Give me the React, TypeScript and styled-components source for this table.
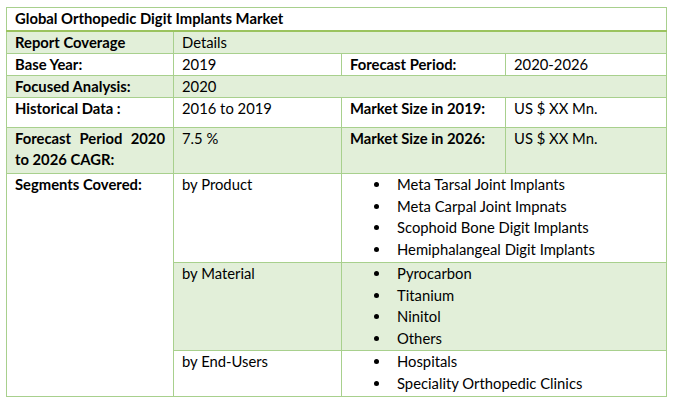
import React, { ReactElement } from 'react'
import styled, { createGlobalStyle } from 'styled-components'

const GREEN_BORDER = '#a8d08d'
const GREEN_STRONG = '#9bc35f'
const GREEN_FILL = '#e2efd9'

const GlobalStyle = createGlobalStyle`
  html, body {
    margin: 0;
    padding: 0;
    background: #ffffff;
  }
  body {
    font-family: Lato, "Open Sans", "Liberation Sans", sans-serif;
    color: #000000;
  }
`

const Page = styled.div`
  padding: 7px 0 0 6px;
  width: 673px;
  height: 404px;
  box-sizing: border-box;
`

const Table = styled.table`
  border-collapse: collapse;
  table-layout: fixed;
  width: 660px;
  font-size: 14.8px;
  line-height: 21px;
`

const Cell = styled.td<{ $bold?: boolean; $shaded?: boolean; $h?: number; $justify?: boolean }>`
  border: 1px solid ${GREEN_BORDER};
  padding: 0 8px;
  vertical-align: top;
  font-weight: ${(p) => (p.$bold ? 700 : 400)};
  background: ${(p) => (p.$shaded ? GREEN_FILL : '#ffffff')};
  height: ${(p) => (p.$h ? `${p.$h}px` : 'auto')};
  box-sizing: border-box;
  text-align: ${(p) => (p.$justify ? 'justify' : 'left')};
  text-align-last: left;
  white-space: ${(p) => (p.$justify ? 'normal' : 'nowrap')};
`

const TitleCell = styled(Cell)`
  border-bottom: 2px solid ${GREEN_STRONG};
`

const List = styled.ul`
  list-style: none;
  margin: 0;
  padding: 0 0 0 24px;
`

const Item = styled.li`
  display: flex;
  align-items: center;
  height: 21.7px;
  &::before {
    content: '';
    width: 5px;
    height: 5px;
    border-radius: 50%;
    background: #000000;
    margin-right: 18px;
    flex: none;
  }
`

const segments = [
  {
    label: 'by Product',
    h: 89,
    shaded: false,
    items: [
      'Meta Tarsal Joint Implants',
      'Meta Carpal Joint Impnats',
      'Scophoid Bone Digit Implants',
      'Hemiphalangeal Digit Implants',
    ],
  },
  {
    label: 'by Material',
    h: 88,
    shaded: true,
    items: ['Pyrocarbon', 'Titanium', 'Ninitol', 'Others'],
  },
  {
    label: 'by End-Users',
    h: 46,
    shaded: false,
    items: ['Hospitals', 'Speciality Orthopedic Clinics'],
  },
]

const App = (): ReactElement => {
  return (
    <Page>
      <GlobalStyle />
      <Table>
        <colgroup>
          <col style={{ width: 167 }} />
          <col style={{ width: 168 }} />
          <col style={{ width: 164 }} />
          <col style={{ width: 161 }} />
        </colgroup>
        <tbody>
          <tr>
            <TitleCell $bold colSpan={4} $h={23}>
              Global Orthopedic Digit Implants Market
            </TitleCell>
          </tr>
          <tr>
            <Cell $bold $shaded $h={22}>Report Coverage</Cell>
            <Cell $shaded colSpan={3}>Details</Cell>
          </tr>
          <tr>
            <Cell $bold $h={22}>Base Year:</Cell>
            <Cell>2019</Cell>
            <Cell $bold>Forecast Period:</Cell>
            <Cell>2020-2026</Cell>
          </tr>
          <tr>
            <Cell $bold $shaded $h={22}>Focused Analysis:</Cell>
            <Cell $shaded colSpan={3}>2020</Cell>
          </tr>
          <tr>
            <Cell $bold $h={30}>Historical Data :</Cell>
            <Cell>2016 to 2019</Cell>
            <Cell $bold>Market Size in 2019:</Cell>
            <Cell>US $ XX Mn.</Cell>
          </tr>
          <tr>
            <Cell $bold $shaded $justify $h={46}>
              Forecast Period 2020 to 2026 CAGR:
            </Cell>
            <Cell $shaded>7.5 %</Cell>
            <Cell $bold $shaded>Market Size in 2026:</Cell>
            <Cell $shaded>US $ XX Mn.</Cell>
          </tr>
          {segments.map((seg, i) => (
            <tr key={seg.label}>
              {i === 0 && (
                <Cell $bold rowSpan={segments.length}>
                  Segments Covered:
                </Cell>
              )}
              <Cell $shaded={seg.shaded} $h={seg.h}>
                {seg.label}
              </Cell>
              <Cell $shaded={seg.shaded} colSpan={2}>
                <List>
                  {seg.items.map((item) => (
                    <Item key={item}>{item}</Item>
                  ))}
                </List>
              </Cell>
            </tr>
          ))}
        </tbody>
      </Table>
    </Page>
  )
}

export default App
